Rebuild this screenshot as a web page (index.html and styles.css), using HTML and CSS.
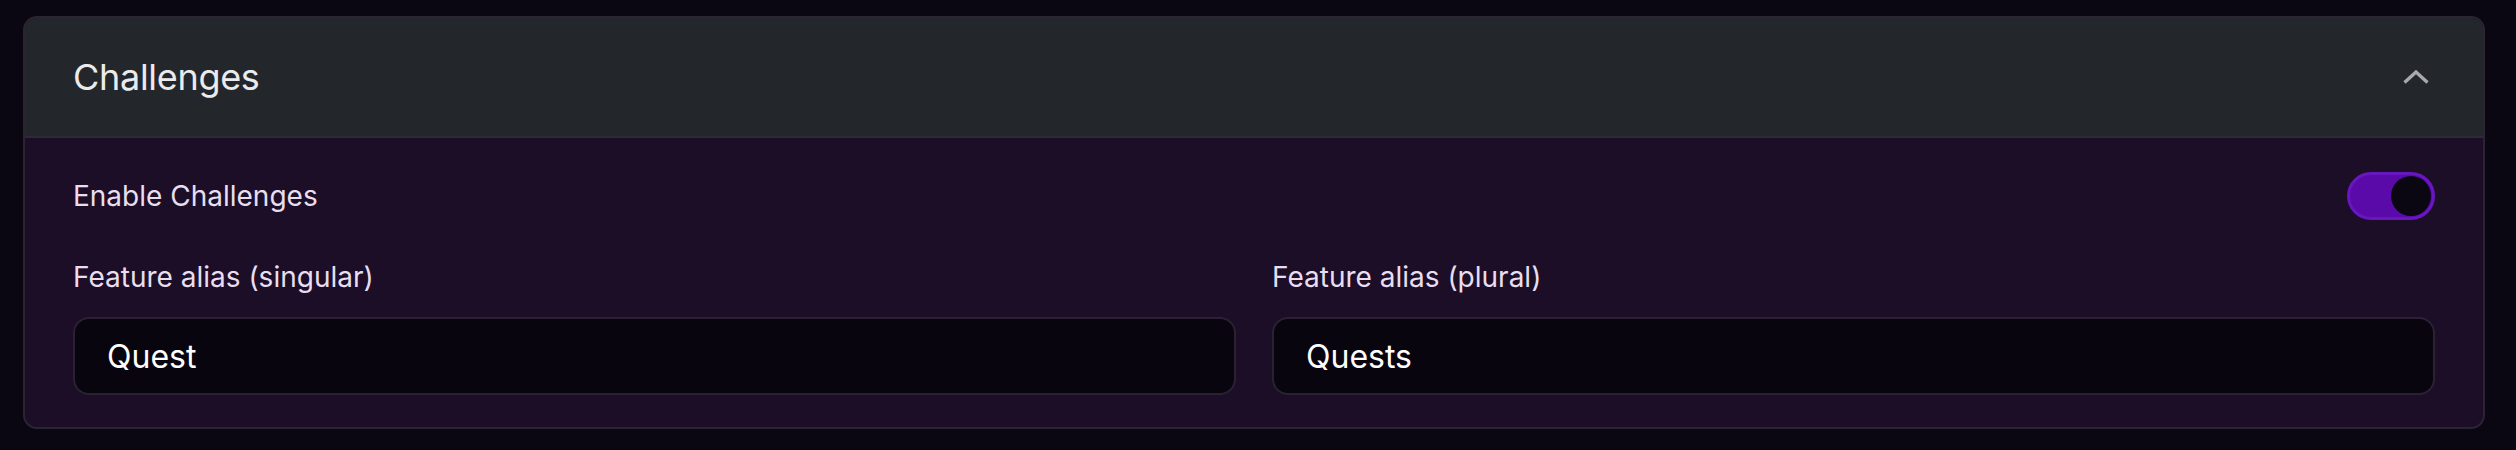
FILE: index.html
```html
<!DOCTYPE html>
<html lang="en">
<head>
<meta charset="utf-8">
<title>Challenges</title>
<link rel="stylesheet" href="styles.css">
</head>
<body>
<div class="page">
  <section class="card">
    <header class="card-header">
      <h2 class="card-title">Challenges</h2>
      <button class="collapse-btn" aria-label="Collapse">
        <svg class="chevron" width="28" height="16" viewBox="0 0 28 16" fill="none">
          <polyline points="2.5,13.5 14,3 25.5,13.5" stroke="#a9a8b1" stroke-width="3.4" stroke-linecap="butt" stroke-linejoin="miter"/>
        </svg>
      </button>
    </header>
    <div class="card-body">
      <div class="toggle-row">
        <span class="toggle-label">Enable Challenges</span>
        <span class="switch on" role="switch" aria-checked="true"><span class="knob"></span></span>
      </div>
      <div class="fields">
        <label class="field">
          <span class="field-label">Feature alias (singular)</span>
          <input class="field-input" type="text" value="Quest">
        </label>
        <label class="field">
          <span class="field-label">Feature alias (plural)</span>
          <input class="field-input" type="text" value="Quests">
        </label>
      </div>
    </div>
  </section>
</div>
</body>
</html>
```
FILE: styles.css
```css
* { box-sizing: border-box; }
html, body {
  margin: 0;
  padding: 0;
  background: #0a0612;
  font-family: Inter, "Noto Sans", sans-serif;
}
.page {
  padding: 16px 31px 22px 23px;
}
.card {
  border: 2px solid #2a2433;
  border-radius: 14px;
  overflow: hidden;
  background: #1c0e27;
}
.card-header {
  height: 120px;
  background: #23272b;
  border-bottom: 2px solid #2f2a37;
  display: flex;
  align-items: center;
  justify-content: space-between;
  padding: 0 48px;
}
.card-title {
  margin: 0;
  font-size: 36px;
  font-weight: 400;
  color: #ebebee;
  letter-spacing: -0.3px;
}
.collapse-btn {
  background: none;
  border: 0;
  padding: 0;
  margin-right: 5px;
  display: flex;
  align-items: center;
  cursor: pointer;
}
.chevron { display: block; }
.card-body {
  padding: 34px 48px 32px;
}
.toggle-row {
  display: flex;
  align-items: center;
  justify-content: space-between;
  height: 48px;
}
.toggle-label {
  font-size: 28px;
  color: #e8def0;
}
.switch {
  width: 88px;
  height: 48px;
  border-radius: 24px;
  background: #5a0aa9;
  border: 3px solid #6716c0;
  display: flex;
  align-items: center;
  justify-content: flex-end;
  padding: 0 1px;
}
.knob {
  width: 40px;
  height: 40px;
  border-radius: 50%;
  background: #0a0612;
}
.fields {
  display: grid;
  grid-template-columns: 1fr 1fr;
  column-gap: 36px;
  margin-top: 37px;
}
.field {
  display: flex;
  flex-direction: column;
}
.field-label {
  font-size: 28px;
  line-height: 40px;
  color: #e8def0;
  margin-bottom: 20px;
}
.field-input {
  height: 78px;
  width: 100%;
  background: #09050f;
  border: 2px solid #2a2233;
  border-radius: 16px;
  padding: 0 32px;
  font-family: Inter, "Noto Sans", sans-serif;
  font-size: 32px;
  color: #ffffff;
  outline: none;
}
```
